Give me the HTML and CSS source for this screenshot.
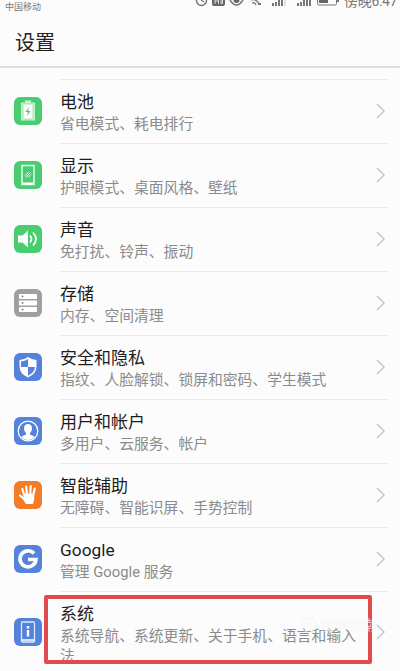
FILE: index.html
```html
<!DOCTYPE html>
<html lang="zh-CN">
<head>
<meta charset="utf-8">
<title>设置</title>
<link rel="stylesheet" href="styles.css">
</head>
<body>
<div class="screen">
  <div class="status">
    <span class="carrier">中国移动</span>
    <svg class="status-icons" width="146" height="10" viewBox="194 0 146 10" fill="none" stroke="#777">
      <circle cx="201.500" cy="0.500" r="5" stroke-width="1.500"/><path d="M201 0l3 2" stroke-width="1.300"/>
      <rect x="212" y="-6" width="13" height="12" rx="2" fill="#666" stroke="none"/>
      <path d="M215-2v6M218.500-2v6M215 1h3.500M221-2v5.500h1.500V-2" stroke="#ddd" stroke-width="1"/>
      <path d="M230 0q6.500 10 13 0" stroke-width="1.500"/><circle cx="236.500" cy="0" r="3" fill="#666" stroke="none"/>
      <path d="M251 0q5-2 8 4M252 3q3-1 4 2" stroke-width="1.300"/><path d="M258 4h3" stroke-width="2"/>
      <path d="M273 3v3M276 2v4M279 0v6M282-1v7M298 3v3M301 2v4M304 0v6M307-1v7M310-1v7" stroke-width="2"/><path d="M285-1v7" stroke="#ccc" stroke-width="1"/>
      <rect x="317.500" y="-6" width="19" height="11" rx="1.500" stroke-width="1"/><path d="M319-3h9v6h-9z" fill="#666" stroke="none"/><path d="M338-2v4" stroke-width="2"/>
    </svg>
    <span class="clock">傍晚6:47</span>
  </div>
  <h1 class="heading">设置</h1>
  <main class="list">
    <section class="row">
      <svg class="icon green" viewBox="0 0 28 28"><path d="M11 3.500h6v2h4v18H7v-18h4z" fill="#c9f3d5"/><path d="M9 7h10v15H9z" fill="#fff" stroke="#6ad88b" stroke-width=".6"/><path d="M15 10l-3.500 5H14l-1 4 3.500-5H14z" fill="#45c96d"/></svg>
      <div class="body"><div class="text"><h2>电池</h2><p>省电模式、耗电排行</p></div><svg class="chevron" viewBox="0 0 9 16"><path d="M1 1l7 7-7 7"/></svg></div>
    </section>
    <section class="row">
      <svg class="icon green" viewBox="0 0 28 28"><path d="M8 4.500h12v19H8z" fill="none" stroke="#e8fbed" stroke-width="1.500"/><path d="M8 21.500h12v2H8z" fill="#fff"/><path d="M11 14.500l3.500-3.500M11.500 16.500l5-5M14 16.500l3-3" stroke="#fff" stroke-width="1"/></svg>
      <div class="body"><div class="text"><h2>显示</h2><p>护眼模式、桌面风格、壁纸</p></div><svg class="chevron" viewBox="0 0 9 16"><path d="M1 1l7 7-7 7"/></svg></div>
    </section>
    <section class="row">
      <svg class="icon green" viewBox="0 0 28 28"><path d="M4 10.500h4.500L14 5.500v17l-5.500-5H4z" fill="#fff"/><path d="M16 10.500q3 3.500 0 7M19 7.500q6 6.500 0 13" fill="none" stroke="#fff" stroke-width="1.700"/></svg>
      <div class="body"><div class="text"><h2>声音</h2><p>免打扰、铃声、振动</p></div><svg class="chevron" viewBox="0 0 9 16"><path d="M1 1l7 7-7 7"/></svg></div>
    </section>
    <section class="row">
      <svg class="icon gray" viewBox="0 0 28 28"><g fill="#fff"><rect x="5" y="5" width="18" height="5" rx=".8"/><rect x="5" y="11.500" width="18" height="5" rx=".8"/><rect x="5" y="18" width="18" height="5" rx=".8"/></g><g fill="#888"><circle cx="8.500" cy="7.500" r="1"/><circle cx="8.500" cy="14" r="1"/><circle cx="8.500" cy="20.500" r="1"/></g></svg>
      <div class="body"><div class="text"><h2>存储</h2><p>内存、空间清理</p></div><svg class="chevron" viewBox="0 0 9 16"><path d="M1 1l7 7-7 7"/></svg></div>
    </section>
    <section class="row">
      <svg class="icon blue" viewBox="0 0 28 28"><path d="M14 4q4 3 8.500 3v6q0 8-8.500 11.500Q5.500 21 5.500 13V7Q10 7 14 4z" fill="#fff"/><path d="M14 14v8.500Q20.500 20 21 14zM14 14H7V8.500Q11 8 14 6z" fill="#5583dc"/></svg>
      <div class="body"><div class="text"><h2>安全和隐私</h2><p>指纹、人脸解锁、锁屏和密码、学生模式</p></div><svg class="chevron" viewBox="0 0 9 16"><path d="M1 1l7 7-7 7"/></svg></div>
    </section>
    <section class="row">
      <svg class="icon blue" viewBox="0 0 28 28"><circle cx="14" cy="14" r="9.800" fill="none" stroke="#fff" stroke-width="1.300"/><path d="M14 7q4 0 4 4.500 0 3-2 4.500v1.500l4.500 2Q18 23 14 23t-6.500-3.500l4.500-2V16q-2-1.500-2-4.500Q10 7 14 7z" fill="#fff"/></svg>
      <div class="body"><div class="text"><h2>用户和帐户</h2><p>多用户、云服务、帐户</p></div><svg class="chevron" viewBox="0 0 9 16"><path d="M1 1l7 7-7 7"/></svg></div>
    </section>
    <section class="row">
      <svg class="icon orange" viewBox="0 0 28 28"><path d="M10.500 15L8.300 8M13 14l-.8-8.500M16.200 14l.5-9M19 15l1.800-7.500M11 18.500l-5-4" fill="none" stroke="#fff" stroke-width="2.200" stroke-linecap="round"/><path d="M9.500 12.500h10.600q.9 5.500-1.100 10.500h-7l-5-7.500 3.500 1z" fill="#fff"/></svg>
      <div class="body"><div class="text"><h2>智能辅助</h2><p>无障碍、智能识屏、手势控制</p></div><svg class="chevron" viewBox="0 0 9 16"><path d="M1 1l7 7-7 7"/></svg></div>
    </section>
    <section class="row latin">
      <svg class="icon blue" viewBox="0 0 28 28"><path d="M20 8.500A8 8 0 1 0 22 14.500H14" fill="none" stroke="#fff" stroke-width="3.600"/></svg>
      <div class="body"><div class="text"><h2>Google</h2><p>管理 Google 服务</p></div><svg class="chevron" viewBox="0 0 9 16"><path d="M1 1l7 7-7 7"/></svg></div>
    </section>
    <section class="row last">
      <svg class="icon blue" viewBox="0 0 28 28"><rect x="7.500" y="4" width="13" height="20" rx="1" fill="none" stroke="#dce8ff" stroke-width="1.300"/><path d="M8 22h12" stroke="#fff" stroke-width="1.500"/><path d="M14 8v2.500M14 12v6.500" stroke="#fff" stroke-width="2.400"/></svg>
      <div class="body"><div class="text"><h2>系统</h2><p>系统导航、系统更新、关于手机、语言和输入法</p></div><svg class="chevron" viewBox="0 0 9 16"><path d="M1 1l7 7-7 7"/></svg></div>
    </section>
  </main>
  <div class="highlight"></div>
  <div class="watermark"><span class="mark">S</span><span>搜狗指南</span></div>
</div>
</body>
</html>
```
FILE: styles.css
```css
* { box-sizing: border-box; }
body { margin: 0; font-family: Roboto, "Noto Sans CJK SC", sans-serif; background: #fcfcfc; }
.screen { position: relative; height: 671px; overflow: hidden; }
.status { height: 14px; display: flex; align-items: flex-start; color: #777; }
.carrier { width: 194px; padding-left: 5px; font-size: 9px; line-height: 14px; }
.status-icons { flex: none; }
.clock { margin: -8px 0 0 4px; font-size: 14px; line-height: 18px; letter-spacing: -.3px; white-space: nowrap; }
.heading { margin: 0; height: 54px; padding-left: 15px; border-bottom: 2px solid #dedede; font-size: 20px; font-weight: 400; line-height: 58px; color: #222; }
.list { margin: 11px 0 0; }
.row { display: flex; height: 63.95px; padding: 0 12px 0 14px; }
.icon { flex: none; width: 28px; height: 28px; margin: 18px 18px 0 0; border-radius: 6px; }
.green { background: #4acd70; }
.gray { background: #a0a0a0; }
.blue { background: #5583dc; }
.orange { background: #f47c27; }
.body { flex: 1; display: flex; justify-content: space-between; border-top: 1px solid #ebebeb; }
.text { width: 302px; padding-top: 10px; }
h2 { margin: 0; font-size: 17px; font-weight: 400; line-height: 24px; color: #1c1c1c; }
p { margin: 0; font-size: 14.8px; line-height: 20px; color: #8b8b8b; }
.chevron { flex: none; width: 9px; height: 16px; margin: 23px 3px 0 0; fill: none; stroke: #c4c4c4; stroke-width: 1.4; }
.latin h2 { font-size: 17.3px; }
.last { height: 82px; }
.last .icon { margin-top: 27px; }
.last .chevron { margin-top: 32px; }
.highlight { position: absolute; left: 44px; top: 595px; width: 328px; height: 69px; border: 4px solid #e04c4e; border-radius: 2px; }
.watermark { position: absolute; left: 301px; top: 615px; display: flex; align-items: center; gap: 3px; font-size: 14px; line-height: 20px; color: rgba(255,255,255,.65); text-shadow: 0 0 1px rgba(0,0,0,.06); white-space: nowrap; }
.mark { width: 16px; height: 16px; border: 1px solid rgba(240,240,240,.8); border-radius: 50%; line-height: 14px; text-align: center; }
```
